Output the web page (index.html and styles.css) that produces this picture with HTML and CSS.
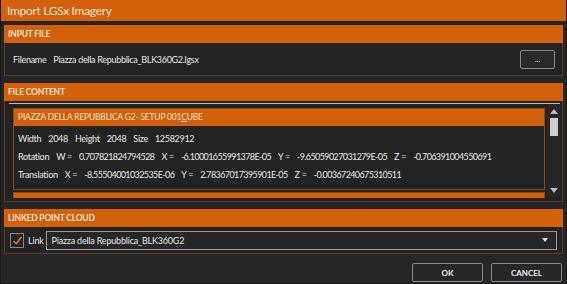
FILE: index.html
```html
<!DOCTYPE html>
<html lang="en">
<head>
    <meta charset="UTF-8">
    <title>Import LGSx Imagery</title>
    <link rel="stylesheet" href="styles.css">
</head>
<body>
<div class="window">
    <div class="titlebar">Import LGSx Imagery</div>
    <div class="content">
        <div class="section">
            <div class="section-header">Input File</div>
            <div class="section-body input-row">
                <span class="label">Filename</span>
                <span class="value">Piazza della Repubblica_BLK360G2.lgsx</span>
                <button class="browse">...</button>
            </div>
        </div>

        <div class="section">
            <div class="section-header">File Content</div>
            <div class="section-body list-body">
                <div class="list">
                    <div class="list-items">
                        <div class="card">
                            <div class="card-header">PIAZZA DELLA REPUBBLICA G2- SETUP 001<u>C</u>UBE</div>
                            <div class="card-body">
                                <div class="row"><span>Width</span><span>2048</span><span>Height</span><span>2048</span><span>Size</span><span>12582912</span></div>
                                <div class="row"><span>Rotation</span><span>W =</span><span class="num">0.707821824794528</span><span>X =</span><span class="num">-6.10001655991378E-05</span><span>Y =</span><span class="num">-9.65059027031279E-05</span><span>Z =</span><span class="num">-0.706391004550691</span></div>
                                <div class="row"><span>Translation</span><span>X =</span><span class="num">-8.55504001032535E-06</span><span>Y =</span><span class="num">2.78367017395901E-05</span><span>Z =</span><span class="num">-0.00367240675310511</span></div>
                            </div>
                        </div>
                        <div class="card next"></div>
                    </div>
                    <div class="scrollbar">
                        <span class="arrow up"></span>
                        <span class="thumb"></span>
                        <span class="track"></span>
                        <span class="arrow down"></span>
                    </div>
                </div>
            </div>
        </div>

        <div class="section">
            <div class="section-header">Linked Point Cloud</div>
            <div class="section-body link-row">
                <span class="checkbox">
                    <svg width="11" height="11" viewBox="0 0 11 11"><path d="M1.5 6 L4.2 8.6 L9.5 2" fill="none" stroke="#e0701a" stroke-width="1.6"/></svg>
                </span>
                <span class="label">Link</span>
                <div class="combo">
                    <span>Piazza della Repubblica_BLK360G2</span>
                    <svg width="6" height="4" viewBox="0 0 6 4"><path d="M0 0 H6 L3 4 Z" fill="#ddd"/></svg>
                </div>
            </div>
        </div>

        <div class="actions">
            <button class="btn">OK</button>
            <button class="btn">CANCEL</button>
        </div>
    </div>
</div>
</body>
</html>
```

FILE: styles.css
```css
body {
    margin: 0;
    background: #1e1e1e;
    font-family: Lato, "Open Sans", sans-serif;
    color: #e8e8e8;
}
.window {
    width: 567px;
    height: 284px;
    box-sizing: border-box;
    background: #262626;
    border: 1px solid #1a1a1a;
    border-top: none;
    display: flex;
    flex-direction: column;
}
.titlebar {
    height: 21px;
    background: #d3600b;
    color: #fbe6d6;
    font-size: 12px;
    letter-spacing: -0.3px;
    line-height: 21px;
    padding-left: 6px;
    flex-shrink: 0;
}
.content {
    padding: 4px 3px 0 3px;
    display: flex;
    flex-direction: column;
}
.section {
    margin-bottom: 7px;
}
.section-header {
    background: #d3600b;
    height: 18px;
    line-height: 18px;
    padding-left: 4px;
    font-size: 8.5px;
    letter-spacing: -0.2px;
    font-weight: bold;
    text-transform: uppercase;
    color: #fbe3d0;
}
.section-body {
    background: #232323;
    border: 1px solid #5e3b20;
    border-top: none;
}
.input-row {
    height: 32px;
    display: flex;
    align-items: center;
    padding: 0 7px 0 8px;
    font-size: 9px;
    letter-spacing: -0.3px;
}
.label {
    margin-right: 7px;
}
.value {
    flex: 1;
}
.browse {
    width: 35px;
    height: 19px;
    background: #2a2a2a;
    border: 1px solid #8a8a8a;
    border-radius: 2px;
    color: #eee;
    font-size: 8px;
    line-height: 10px;
    padding: 0;
    font-family: inherit;
}
.list-body {
    padding: 2px 2px 3px 4px;
}
.list {
    border-top: 1px solid #b8b8b8;
    display: flex;
    height: 94px;
    overflow: hidden;
}
.list-items {
    flex: 1;
    min-width: 0;
    overflow: hidden;
    padding: 4px 2px 0 4px;
}
.card {
    border: 1px solid #8a4a16;
    margin-bottom: 2px;
}
.card-header {
    background: #d3600b;
    height: 17px;
    line-height: 17px;
    padding-left: 4px;
    font-size: 8.5px;
    letter-spacing: -0.2px;
    color: #fbe3d0;
}
.card-body {
    background: #232323;
    padding: 4px 4px 5px 4px;
    font-size: 9px;
    letter-spacing: -0.3px;
}
.row {
    display: flex;
    gap: 7px;
    height: 18px;
    line-height: 18px;
    white-space: nowrap;
}
.num {
    letter-spacing: -0.6px;
}
.card.next {
    background: #d3600b;
    height: 8px;
}
.scrollbar {
    width: 13px;
    flex-shrink: 0;
    display: flex;
    flex-direction: column;
    align-items: center;
    background: #262626;
    padding-top: 3px;
    padding-bottom: 3px;
}
.arrow {
    width: 0;
    height: 0;
    border-left: 4px solid transparent;
    border-right: 4px solid transparent;
    margin: 2px 0;
}
.arrow.up {
    border-bottom: 5px solid #bbb;
}
.arrow.down {
    border-top: 5px solid #bbb;
}
.thumb {
    width: 8px;
    height: 18px;
    background: #cfcfcf;
    margin-top: 2px;
}
.track {
    flex: 1;
}
.link-row {
    height: 26px;
    display: flex;
    align-items: center;
    padding: 0 5px 0 5px;
    font-size: 9px;
    letter-spacing: -0.2px;
}
.checkbox {
    width: 12px;
    height: 13px;
    border: 1px solid #888;
    display: flex;
    align-items: center;
    justify-content: center;
    margin-right: 4px;
}
.link-row .label {
    margin-right: 2px;
}
.combo {
    flex: 1;
    height: 17px;
    border: 1px solid #9a9a9a;
    background: #262626;
    display: flex;
    align-items: center;
    justify-content: space-between;
    padding: 0 8px 0 5px;
}
.actions {
    display: flex;
    justify-content: flex-end;
    gap: 8px;
    padding-right: 1px;
    margin-top: 2px;
}
.btn {
    width: 71px;
    height: 19px;
    background: #262626;
    border: 1px solid #8a8a8a;
    border-radius: 2px;
    color: #f0f0f0;
    font-family: inherit;
    font-size: 8px;
    font-weight: bold;
    padding: 0;
}
```
